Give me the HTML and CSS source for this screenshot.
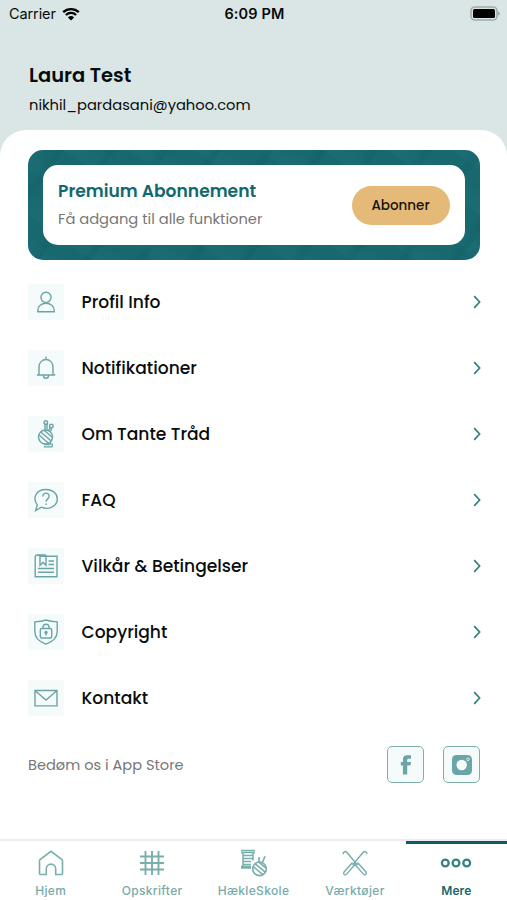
FILE: index.html
```html
<!DOCTYPE html>
<html lang="da">
<head>
    <meta charset="UTF-8">
    <meta name="viewport" content="width=device-width, initial-scale=1.0">
    <title>Mere</title>
    <link rel="stylesheet" href="styles.css">
</head>
<body>
    <div class="status-bar">
        <div class="carrier">
            <span>Carrier</span>
            <svg width="18" height="14" viewBox="0 0 18 14">
                <path d="M1.2 5.2a11.2 11.2 0 0 1 15.6 0M3.9 8a7.3 7.3 0 0 1 10.2 0" fill="none" stroke="#000" stroke-width="2.3"/>
                <path d="M5.9 10.4a4.5 4.5 0 0 1 6.2 0L9 13.6z"/>
            </svg>
        </div>
        <div class="clock">6:09 PM</div>
        <svg class="battery" width="31" height="15" viewBox="0 0 31 15">
            <rect x="1" y="1" width="26" height="13" rx="4" fill="none" stroke="#a3abaa" stroke-width="1.6"/>
            <rect x="3" y="3" width="22" height="9" rx="1.5"/>
            <path d="M28 5.2q4 2.3 0 4.6z" fill="#a3abaa"/>
        </svg>
    </div>

    <div class="user">
        <h1>Laura Test</h1>
        <p>nikhil_pardasani@yahoo.com</p>
    </div>

    <div class="content">
        <div class="premium">
            <div class="premium-card">
                <div>
                    <h2>Premium Abonnement</h2>
                    <p>Få adgang til alle funktioner</p>
                </div>
                <button class="subscribe">Abonner</button>
            </div>
        </div>

        <ul class="menu">
            <li>
                <span class="menu-icon"><svg width="28" height="28" viewBox="0 0 28 28"><circle cx="14" cy="9.300" r="5.100"/><path d="M5.800 23.800v-1.600a8.200 7 0 0 1 16.400 0v1.600z"/></svg></span>
                <span class="label">Profil Info</span>
                <svg class="arrow" width="8" height="14" viewBox="0 0 8 14"><path d="M1.2 1.2L6.6 7l-5.4 5.8"/></svg>
            </li>
            <li>
                <span class="menu-icon"><svg width="28" height="28" viewBox="0 0 28 28"><path d="M14 2.500v3M4.800 21h18.400M7 20.800v-8a7 7.300 0 0 1 14 0v8M11.500 21.500a2.500 2.800 0 0 0 5 0"/></svg></span>
                <span class="label">Notifikationer</span>
                <svg class="arrow" width="8" height="14" viewBox="0 0 8 14"><path d="M1.2 1.2L6.6 7l-5.4 5.8"/></svg>
            </li>
            <li>
                <span class="menu-icon"><svg width="28" height="28" viewBox="0 0 28 28"><circle cx="13.500" cy="17" r="7"/><path d="M7 15l9.500 8.200M8.700 12l10.500 9M12 10.300l8.300 7M13 9.700V4M15 9.700V4M16.800 10.500l1.500-3M18.500 11.300l1.300-3M18.500 22.300v1.600h.8c1.500 0 1.500 3 0 3h-7.500M12 24.600h6"/><circle cx="13.800" cy="2.500" r="1.800"/><circle cx="19.300" cy="6" r="1.800"/></svg></span>
                <span class="label">Om Tante Tråd</span>
                <svg class="arrow" width="8" height="14" viewBox="0 0 8 14"><path d="M1.2 1.2L6.6 7l-5.4 5.8"/></svg>
            </li>
            <li>
                <span class="menu-icon"><svg width="28" height="28" viewBox="0 0 28 28"><path d="M5.300 18.700C.5 13 3.200 3.500 14 3.500c7 0 11.300 4.300 11.300 9.300 0 8-9 11.500-16 8.400L3.700 24.500z"/><path d="M10.800 10.500c0-4.600 6.600-4.200 6.400-.2-.1 2.600-3.100 2.600-3.100 5.400"/><path d="M14.100 17.500v1.600"/></svg></span>
                <span class="label">FAQ</span>
                <svg class="arrow" width="8" height="14" viewBox="0 0 8 14"><path d="M1.2 1.2L6.6 7l-5.4 5.8"/></svg>
            </li>
            <li>
                <span class="menu-icon"><svg width="28" height="28" viewBox="0 0 28 28"><path d="M8.500 4.300H25v20.400H3.200V5q0-2 2.200-2 1.500 0 1.600 1.300M8 3.800v9.500l3-2.800 3 2.800V4q0-1-1.200-1H5.500M16.500 9H22M16.500 12.500H22M6 16.500h16M6 20.300h16"/></svg></span>
                <span class="label">Vilkår &amp; Betingelser</span>
                <svg class="arrow" width="8" height="14" viewBox="0 0 8 14"><path d="M1.2 1.2L6.6 7l-5.4 5.8"/></svg>
            </li>
            <li>
                <span class="menu-icon"><svg width="28" height="28" viewBox="0 0 28 28"><path d="M14 2C10.500 3.300 6.500 3.700 2.800 3.900v9.600c0 6 5 10.500 11.200 12.700 6.200-2.200 11.200-6.700 11.200-12.700V3.900C21.500 3.700 17.500 3.300 14 2z"/><rect x="8.300" y="10.500" width="11.400" height="9.500" rx="1.500"/><path d="M11 10.500V9.300a3 3 0 0 1 6 0v1.200M14 15v2.500"/><circle cx="14" cy="14.500" r="1" fill="#6ba5a5"/></svg></span>
                <span class="label">Copyright</span>
                <svg class="arrow" width="8" height="14" viewBox="0 0 8 14"><path d="M1.2 1.2L6.6 7l-5.4 5.8"/></svg>
            </li>
            <li>
                <span class="menu-icon"><svg width="28" height="28" viewBox="0 0 28 28"><path d="M3 6.500h22v15.400H3zM3.500 7L14 16 24.500 7"/></svg></span>
                <span class="label">Kontakt</span>
                <svg class="arrow" width="8" height="14" viewBox="0 0 8 14"><path d="M1.2 1.2L6.6 7l-5.4 5.8"/></svg>
            </li>
        </ul>

        <div class="footer-row">
            <span class="rate">Bedøm os i App Store</span>
            <a class="social" href="#"><svg width="20" height="20" viewBox="0 0 20 20"><path d="M6.900 19.500V10.500H4.800V7h2.100V5c0-3.400 1.600-4.700 4.300-4.700H15v3.500h-2.200c-1.200 0-1.600.5-1.600 1.500V7H15l-.5 3.500h-3.300v9z" fill="#6ba5a7"/></svg></a>
            <a class="social" href="#"><svg width="20" height="20" viewBox="0 0 20 20"><rect width="20" height="20" rx="4.500" fill="#6ba5a7"/><circle cx="9.700" cy="10" r="5.200" fill="#f4fbfa"/><circle cx="16" cy="4.300" r="1.300" fill="none" stroke="#f4fbfa" stroke-width=".8"/></svg></a>
        </div>
    </div>

    <div class="tab-bar">
        <a class="tab" href="#">
            <svg width="28" height="28" viewBox="0 0 28 28"><path d="M3 10.500Q2.500 11 2.500 12v12.500q0 1 1 1h5.800v-5.700a4.700 4.700 0 0 1 9.400 0v5.700h5.800q1 0 1-1V12q0-1-.8-1.600L14 2.300z"/></svg>
            <span>Hjem</span>
        </a>
        <a class="tab" href="#">
            <svg width="28" height="28" viewBox="0 0 28 28"><path d="M7.500 2v24M14 2v24M20.500 2v24M2 7.500h24M2 14h24M2 20.500h24" stroke-width="1.900"/></svg>
            <span>Opskrifter</span>
        </a>
        <a class="tab" href="#">
            <svg width="28" height="28" viewBox="0 0 28 28"><path d="M1 1.500h14M1 3.500h14M3 3.500v14M13 3.500v8M3 6.500h10M3 9.500h10M3 12.500h8M3 15.500h8M1 17.500h10M1 19h10" stroke-width="1.500"/><circle cx="19.500" cy="19.800" r="6.800"/><path d="M13.200 17.500l9.500 8M15.200 14.800l10 8.300M18.800 13.200l7.300 6M19 13V8M22.500 13.300l2.500-6"/></svg>
            <span>HækleSkole</span>
        </a>
        <a class="tab" href="#">
            <svg width="28" height="28" viewBox="0 0 28 28"><path d="M2.300 5.300C1.500 3 4.500 1.500 6 3.500L16.500 16M25.700 5.300C26.500 3 23.500 1.500 22 3.500L11.500 16M11.500 13.500l-8.600 9.700q-.8 1.800.5 2.500 1.300.6 2.400-.8l8.200-9.400M16.500 13.500l8.600 9.700q.8 1.800-.5 2.500-1.300.6-2.400-.8L14 15.500" stroke-width="1.400"/></svg>
            <span>Værktøjer</span>
        </a>
        <a class="tab active" href="#">
            <svg width="32" height="28" viewBox="0 0 32 28"><circle cx="5.300" cy="14" r="3.400"/><circle cx="16" cy="14" r="3.400"/><circle cx="26.700" cy="14" r="3.400"/></svg>
            <span>Mere</span>
        </a>
    </div>
</body>
</html>
```
FILE: styles.css
```css
* {
    box-sizing: border-box;
}

body {
    font-family: Poppins, Inter, sans-serif;
    margin: 0;
    height: 900px;
    display: flex;
    flex-direction: column;
    background-color: #d9e6e5;
    color: #080c0c;
    overflow: hidden;
}

h1, h2, p, ul {
    margin: 0;
    padding: 0;
}

.status-bar {
    display: grid;
    grid-template-columns: 1fr auto 1fr;
    align-items: center;
    height: 27px;
    padding: 0 7px 0 9px;
    font-family: Inter, sans-serif;
    font-size: 14.5px;
}

.carrier {
    display: flex;
    align-items: center;
    gap: 6px;
}

.carrier span {
    letter-spacing: -0.1px;
}

.clock {
    font-weight: 600;
    letter-spacing: 0.15px;
}

.battery {
    justify-self: end;
    margin-right: -1px;
}

.user {
    height: 103px;
    padding: 36px 29px 0;
}

.user h1 {
    font-size: 19.5px;
    line-height: 26px;
    font-weight: 600;
}

.user p {
    margin-top: 5px;
    font-size: 14.7px;
    line-height: 22px;
}

.content {
    flex: 1;
    padding: 20px 27px 0 28px;
    background-color: #fff;
    border-radius: 26px 26px 0 0;
}

.premium {
    height: 110px;
    padding: 15px;
    border-radius: 15px;
    background-color: #17696f;
    background-image: repeating-linear-gradient(125deg, transparent 0 19px, rgba(0, 65, 70, .12) 27px, transparent 31px 43px),
        repeating-linear-gradient(35deg, rgba(60, 145, 145, .08) 0 8px, transparent 22px 37px);
}

.premium-card {
    display: flex;
    justify-content: space-between;
    align-items: center;
    height: 80px;
    padding: 0 15.5px 0 15px;
    border-radius: 15px;
    background-color: #fff;
}

.premium h2 {
    font-size: 17.1px;
    line-height: 26px;
    font-weight: 600;
    color: #12696d;
}

.premium p {
    margin-top: 2px;
    font-size: 14.7px;
    line-height: 26px;
    color: #777;
}

.subscribe {
    width: 98px;
    height: 39px;
    padding: 1px 0 0;
    border: none;
    border-radius: 20px;
    background-color: #e5b977;
    color: #17130c;
    font: 500 13.5px Poppins, Inter, sans-serif;
}

.menu {
    list-style: none;
    margin-top: 9px;
}

.menu li {
    display: flex;
    align-items: center;
    height: 66px;
}

.menu-icon {
    display: flex;
    align-items: center;
    justify-content: center;
    width: 36px;
    height: 36px;
    margin-right: 17.5px;
    background-color: #f5fbfb;
}

.menu-icon svg {
    fill: none;
    stroke: #6ba5a5;
    stroke-width: 1.4;
}

.label {
    flex: 1;
    font-size: 17.1px;
    line-height: 26px;
    font-weight: 500;
}

.arrow {
    margin-right: -1px;
    fill: none;
    stroke: #39817f;
    stroke-width: 1.7;
}

.footer-row {
    display: flex;
    align-items: center;
    margin-top: 15px;
}

.rate {
    margin-right: auto;
    font-size: 14.6px;
    line-height: 22px;
    color: #777;
}

.social {
    display: flex;
    align-items: center;
    justify-content: center;
    width: 37px;
    height: 37px;
    margin-left: 19px;
    border: 1.5px solid #7fafab;
    border-radius: 5px;
    background-color: #f4fbfa;
}

.tab-bar {
    display: flex;
    height: 61px;
    background-color: #fff;
    border-top: 2px solid #ececec;
}

.tab {
    flex: 1;
    display: flex;
    flex-direction: column;
    align-items: center;
    padding-top: 8px;
    color: #78aaa8;
    font-family: Inter, sans-serif;
    font-size: 12px;
    font-weight: 500;
    text-decoration: none;
}

.tab svg {
    fill: none;
    stroke: #78aeac;
    stroke-width: 1.6;
}

.tab span {
    margin-top: 5px;
    line-height: 18px;
    letter-spacing: 0.35px;
}

.tab.active {
    color: #17696b;
    font-weight: 600;
    box-shadow: inset 0 3px #0d5d62;
}

.tab.active svg {
    stroke: #39817f;
    stroke-width: 2.3;
}

.tab.active span {
    letter-spacing: 0.1px;
}
```
